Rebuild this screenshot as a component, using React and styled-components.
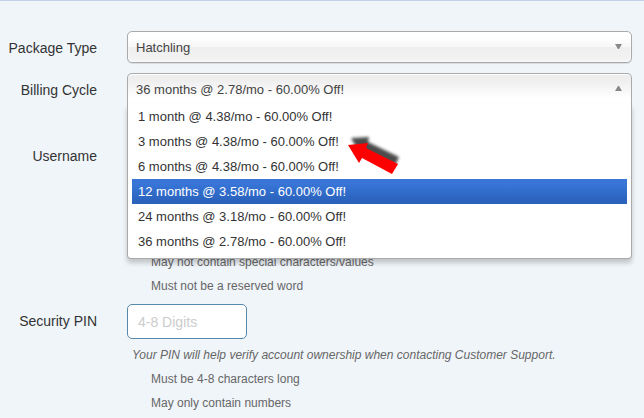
import React, { useState } from "react";
import styled, { createGlobalStyle, css } from "styled-components";

const billingCycles = [
  "1 month @ 4.38/mo - 60.00% Off!",
  "3 months @ 4.38/mo - 60.00% Off!",
  "6 months @ 4.38/mo - 60.00% Off!",
  "12 months @ 3.58/mo - 60.00% Off!",
  "24 months @ 3.18/mo - 60.00% Off!",
  "36 months @ 2.78/mo - 60.00% Off!",
];

const App = () => {
  const [open, setOpen] = useState(true);
  const [cycle, setCycle] = useState(5);
  const [active, setActive] = useState(3);

  const choose = (index) => {
    setCycle(index);
    setOpen(false);
  };

  return (
    <>
      <GlobalStyle />
      <Form>
        <Row>
          <Label htmlFor="package">Package Type</Label>
          <SelectWrap>
            <Select id="package" defaultValue="Hatchling">
              <option>Hatchling</option>
            </Select>
            <Caret viewBox="0 0 7 5">
              <path d="M0 0h7L4 5H3z" />
            </Caret>
          </SelectWrap>
        </Row>

        <Row>
          <Label htmlFor="billing">Billing Cycle</Label>
          <SelectWrap>
            <Trigger
              id="billing"
              type="button"
              aria-haspopup="listbox"
              aria-expanded={open}
              $open={open}
              onClick={() => setOpen(!open)}
            >
              {billingCycles[cycle]}
            </Trigger>
            <Caret viewBox="0 0 7 5">
              <path d={open ? "M0 5h7L4 0H3z" : "M0 0h7L4 5H3z"} />
            </Caret>
            {open && (
              <Menu role="listbox" aria-labelledby="billing">
                {billingCycles.map((text, index) => (
                  <Option
                    key={text}
                    role="option"
                    aria-selected={index === cycle}
                    $active={index === active}
                    onMouseEnter={() => setActive(index)}
                    onClick={() => choose(index)}
                  >
                    {text}
                  </Option>
                ))}
                <Pointer viewBox="0 0 60 48" aria-hidden="true">
                  <defs>
                    <filter id="soft" x="-20%" y="-20%" width="140%" height="140%">
                      <feGaussianBlur stdDeviation="1.8" />
                    </filter>
                  </defs>
                  <path
                    d="M6 6L24 5L23 10L54 25L50 34L19 19L16 24z"
                    fill="#000"
                    opacity="0.7"
                    filter="url(#soft)"
                  />
                  <path d="M3 13L23 11L21 16L53 32L47 42L17 26L14 31z" fill="#f00" />
                </Pointer>
              </Menu>
            )}
          </SelectWrap>
        </Row>

        <UsernameRow>
          <Label htmlFor="username">Username</Label>
          <Field>
            <TextInput id="username" type="text" />
            <UsernameHints>
              <li>May not contain special characters/values</li>
              <li>Must not be a reserved word</li>
            </UsernameHints>
          </Field>
        </UsernameRow>

        <Row>
          <Label htmlFor="pin">Security PIN</Label>
          <Field>
            <TextInput id="pin" type="text" placeholder="4-8 Digits" />
            <Help>
              Your PIN will help verify account ownership when contacting
              Customer Support.
            </Help>
            <Hints>
              <li>Must be 4-8 characters long</li>
              <li>May only contain numbers</li>
            </Hints>
          </Field>
        </Row>
      </Form>
    </>
  );
};

const GlobalStyle = createGlobalStyle`
  * {
    box-sizing: border-box;
  }

  body {
    margin: 0;
    background-color: #f0f5fa;
    color: #333;
    font-family: "Liberation Sans", Arial, sans-serif;
    font-size: 13px;
  }
`;

const Form = styled.form`
  border-top: 1px solid #c3d0ea;
  padding: 30px 12px 0 0;
`;

const Row = styled.div`
  display: grid;
  grid-template-columns: 97px minmax(0, 1fr);
  column-gap: 30px;
  align-items: start;
  margin-bottom: 8px;
`;

const UsernameRow = styled(Row)`
  margin: 32px 0 6px;
`;

const Label = styled.label`
  font-size: 14px;
  line-height: 34px;
  text-align: right;
  white-space: nowrap;
`;

const SelectWrap = styled.div`
  position: relative;
`;

const control = css`
  display: block;
  width: 100%;
  height: 32px;
  padding: 0 24px 0 8px;
  border: 1px solid #aaa;
  border-radius: 5px;
  font: inherit;
  color: #444;
  text-align: left;
  outline: none;
`;

const Select = styled.select`
  ${control}
  appearance: none;
  background: linear-gradient(#fff 20%, #f6f6f6 50%, #eee 52%, #f4f4f4 100%);
  box-shadow: inset 0 0 3px #fff, 0 1px 1px rgba(0, 0, 0, 0.1);
`;

const Trigger = styled.button`
  ${control}
  background: linear-gradient(#eee 20%, #fff 80%);
  box-shadow: inset 0 1px 0 #fff;

  ${({ $open }) =>
    $open &&
    css`
      border-bottom-color: transparent;
      border-radius: 5px 5px 0 0;
    `}
`;

const Caret = styled.svg`
  position: absolute;
  top: 13px;
  right: 10px;
  width: 7px;
  height: 5px;
  fill: #888;
  pointer-events: none;
`;

const Menu = styled.ul`
  position: absolute;
  z-index: 10;
  top: 31px;
  left: 0;
  right: 0;
  margin: 0;
  padding: 0 4px 4px;
  border: 1px solid #aaa;
  border-top: 0;
  border-radius: 0 0 4px 4px;
  background-color: #fff;
  box-shadow: 0 4px 5px rgba(0, 0, 0, 0.2);
  list-style: none;
`;

const Option = styled.li`
  padding: 0 6px;
  line-height: 25px;
  cursor: pointer;

  ${({ $active }) =>
    $active &&
    css`
      background: linear-gradient(#3875d7 20%, #2a62bc 90%);
      color: #fff;
    `}
`;

const Pointer = styled.svg`
  position: absolute;
  top: 28px;
  left: 217px;
  width: 60px;
  height: 48px;
  pointer-events: none;
`;

const Field = styled.div`
  min-width: 0;
`;

const TextInput = styled.input`
  display: block;
  width: 120px;
  height: 35px;
  padding: 0 10px;
  border: 1px solid #5689ab;
  border-radius: 5px;
  background-color: #fff;
  font: inherit;
  font-size: 14px;
  outline: none;

  &::placeholder {
    color: #ccc;
    opacity: 1;
  }
`;

const Help = styled.p`
  margin: 4px 0 0 5px;
  color: #666;
  font-size: 12px;
  font-style: italic;
  line-height: 24px;
`;

const Hints = styled.ul`
  margin: 0;
  padding: 0 0 0 24px;
  color: #666;
  font-size: 12px;
  line-height: 24px;
  list-style: none;
`;

const UsernameHints = styled(Hints)`
  margin-top: 76px;
`;

export default App;
